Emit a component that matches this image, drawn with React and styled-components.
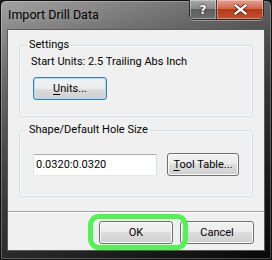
import React from "react";
import styled, { createGlobalStyle } from "styled-components";

const GlobalStyle = createGlobalStyle`
  html, body { margin: 0; padding: 0; background: #1a1a1a; }
  body { font-family: Roboto, "Liberation Sans", sans-serif; font-size: 11px; color: #000; }
  * { box-sizing: border-box; }
`;

const Window = styled.div`
  width: 272px;
  height: 260px;
  display: flex;
  flex-direction: column;
  padding: 0 6px 8px 6px;
  border: 1px solid #111;
  border-radius: 6px 6px 2px 2px;
  background:
    linear-gradient(to right, rgba(255, 255, 255, 0.12), rgba(0, 0, 0, 0.35)),
    linear-gradient(to bottom, #959595 0px, #7c7c7c 28px, #555 80px, #2a2a2a 170px, #0c0c0c 100%);
  box-shadow: inset 0 0 0 1px rgba(255, 255, 255, 0.25);
`;

const TitleBar = styled.div`
  height: 28px;
  display: flex;
  align-items: flex-start;
  justify-content: space-between;
`;

const Title = styled.div`
  font-size: 12.5px;
  line-height: 16px;
  margin: 6px 0 0 1px;
  color: #000;
  text-shadow: 0 0 6px rgba(255, 255, 255, 0.35);
`;

const Captions = styled.div`
  display: flex;
  margin: -1px 1px 0 0;
  height: 20px;
  border: 1px solid #2a2a2a;
  border-top: none;
  border-radius: 0 0 5px 5px;
  overflow: hidden;
  box-shadow: 0 1px 0 rgba(255, 255, 255, 0.35);
`;

const CapButton = styled.div`
  width: ${(p) => (p.$kind === "close" ? 47 : 26)}px;
  height: 100%;
  display: flex;
  align-items: center;
  justify-content: center;
  color: #fff;
  font-family: "DejaVu Sans", sans-serif;
  font-weight: bold;
  font-size: 12px;
  text-shadow: 0 0 2px #000;
  border-left: ${(p) => (p.$kind === "close" ? "1px solid #3a3a3a" : "none")};
  background: ${(p) =>
    p.$kind === "close"
      ? "linear-gradient(to bottom, #e6a08c 0%, #d0674f 45%, #b73a18 50%, #c4502c 100%)"
      : "linear-gradient(to bottom, #a9a9a9 0%, #8a8a8a 45%, #5e5e5e 50%, #6e6e6e 100%)"};
  box-shadow: inset 0 0 0 1px rgba(255, 255, 255, 0.35);
`;

const Client = styled.div`
  flex: 1;
  display: flex;
  flex-direction: column;
  background: #f0f0f0;
  border: 1px solid #5a5a5a;
`;

const Body = styled.div`
  flex: 1;
  display: flex;
  flex-direction: column;
  gap: 5px;
  padding: 7px 11px 0 11px;
`;

const Group = styled.fieldset`
  margin: 0;
  border: 1px solid #d5dfe5;
  border-radius: 3px;
  box-shadow: inset 0 0 0 1px #fbfbfb;
  padding: ${(p) => p.$pad};
  display: flex;
  flex-direction: column;
  align-items: flex-start;
  min-width: 0;
`;

const Legend = styled.legend`
  padding: 0 2px;
  margin-left: -4px;
  line-height: 16px;
  font-size: 11px;
`;

const Label = styled.div`
  line-height: 16px;
`;

const Btn = styled.button`
  font: inherit;
  font-size: 11px;
  color: #000;
  width: ${(p) => p.$w}px;
  height: 23px;
  padding: 0;
  margin: 0;
  border: 1px solid ${(p) => (p.$focus ? "#3c7fb1" : "#707070")};
  border-radius: 3px;
  background: linear-gradient(to bottom, #f2f2f2 0%, #ebebeb 50%, #dddddd 50%, #cfcfcf 100%);
  box-shadow: inset 0 0 0 1px ${(p) => (p.$focus ? "#a4ddf7" : "#fbfbfb")};
  display: flex;
  align-items: center;
  justify-content: center;
  cursor: default;
  u { text-decoration: underline; text-underline-offset: 2px; }
`;

const UnitsBtn = styled(Btn)`
  margin: 7px 0 0 2px;
`;

const FieldRow = styled.div`
  display: flex;
  align-items: center;
  gap: 10px;
  margin-left: 2px;
`;

const Edit = styled.div`
  width: 124px;
  height: 22px;
  background: #fff;
  border: 1px solid #abadb3;
  border-left-color: #e2e3ea;
  border-right-color: #dbdfe6;
  border-bottom-color: #e3e9ef;
  padding: 0 2px;
  display: flex;
  align-items: center;
  font-size: 11px;
`;

const Footer = styled.div`
  height: 39px;
  border-top: 1px solid #a0a0a0;
  box-shadow: inset 0 1px 0 #ffffff;
  display: flex;
  justify-content: flex-end;
  align-items: flex-start;
  gap: 7px;
  padding: 9px 10px 0 0;
`;

const OkWrap = styled.div`
  position: relative;
`;

const Ring = styled.div`
  position: absolute;
  left: -11px;
  top: -7px;
  width: 100px;
  height: 36px;
  border: 5px solid #52f252;
  border-radius: 11px;
  pointer-events: none;
`;

export default function App() {
  return (
    <>
      <GlobalStyle />
      <Window>
        <TitleBar>
          <Title>Import Drill Data</Title>
          <Captions>
            <CapButton $kind="help">?</CapButton>
            <CapButton $kind="close">
              <svg width="13" height="11" viewBox="0 0 13 11">
                <path
                  d="M1.5 1.5 L11.5 9.5 M11.5 1.5 L1.5 9.5"
                  stroke="#3a1a10"
                  strokeWidth="4"
                  strokeLinecap="square"
                />
                <path
                  d="M1.5 1.5 L11.5 9.5 M11.5 1.5 L1.5 9.5"
                  stroke="#fff"
                  strokeWidth="2.4"
                  strokeLinecap="square"
                />
              </svg>
            </CapButton>
          </Captions>
        </TitleBar>
        <Client>
          <Body>
            <Group $pad="1px 11px 16px 11px">
              <Legend>Settings</Legend>
              <Label>Start Units: 2.5 Trailing Abs Inch</Label>
              <UnitsBtn $w={74} $focus>
                <span>
                  <u>U</u>nits...
                </span>
              </UnitsBtn>
            </Group>
            <Group $pad="15px 11px 20px 11px">
              <Legend>Shape/Default Hole Size</Legend>
              <FieldRow>
                <Edit>0.0320:0.0320</Edit>
                <Btn $w={72}>
                  <span>
                    <u>T</u>ool Table...
                  </span>
                </Btn>
              </FieldRow>
            </Group>
          </Body>
          <Footer>
            <OkWrap>
              <Btn $w={74}>OK</Btn>
              <Ring />
            </OkWrap>
            <Btn $w={74}>Cancel</Btn>
          </Footer>
        </Client>
      </Window>
    </>
  );
}
